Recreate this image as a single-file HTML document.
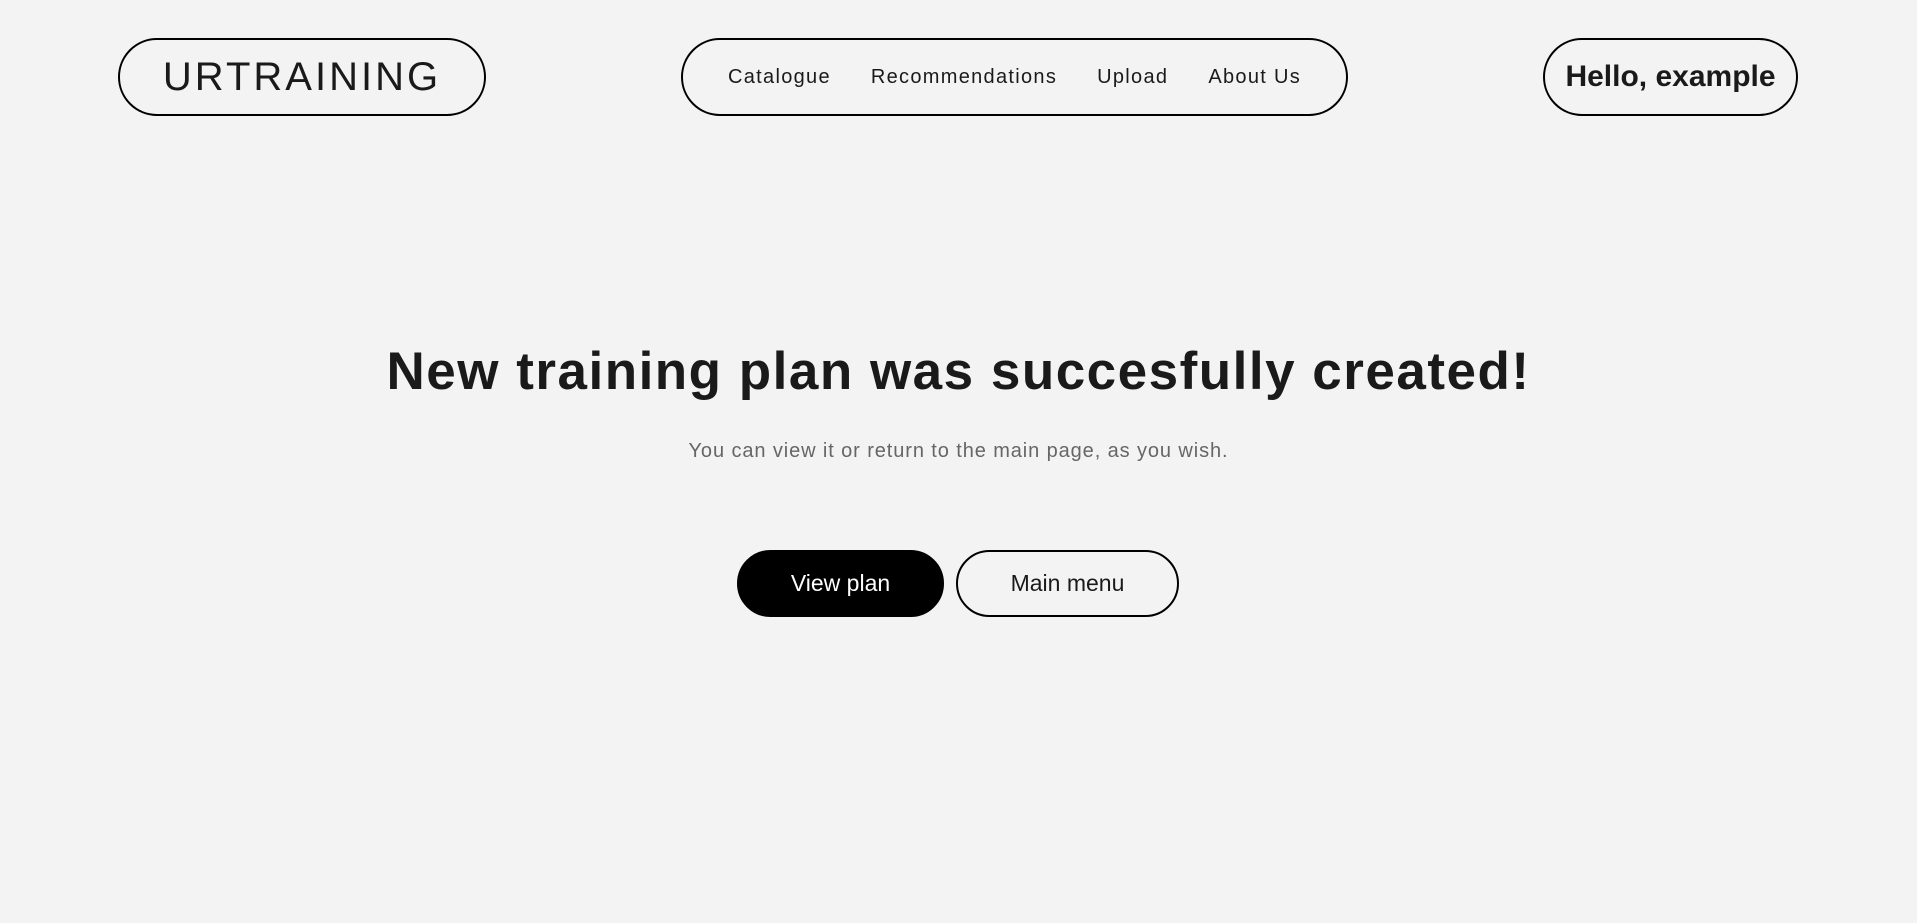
<!DOCTYPE html>
<html><head><style>
body{margin:0;width:1917px;height:923px;background:#f3f3f3;font-family:"Liberation Sans",sans-serif;color:#1a1a1a;position:relative;overflow:hidden}
.box{position:absolute;border:2px solid #000;border-radius:40px;box-sizing:border-box;display:flex;align-items:center;justify-content:center}
.logo{left:118px;top:38px;width:368px;height:78px;font-size:40px;letter-spacing:3px;font-weight:400}
.nav{left:681px;top:38px;width:667px;height:78px;font-size:20px;gap:40px;letter-spacing:1.3px}
.hello{left:1543px;top:38px;width:255px;height:78px;font-size:30px;font-weight:bold}
h1{position:absolute;left:0;width:1917px;top:341px;margin:0;text-align:center;font-size:53px;font-weight:bold;letter-spacing:1.5px}
p{position:absolute;left:0;width:1917px;top:440px;margin:0;text-align:center;font-size:20px;color:#666;letter-spacing:0.9px}
.b1{left:737px;top:550px;width:207px;height:67px;background:#000;color:#fff;font-size:23px;border-radius:34px}
.b2{left:956px;top:550px;width:223px;height:67px;font-size:23px;border-radius:34px}
</style></head><body>
<div class="box logo">URTRAINING</div>
<div class="box nav"><span>Catalogue</span><span>Recommendations</span><span>Upload</span><span>About Us</span></div>
<div class="box hello">Hello, example</div>
<h1>New training plan was succesfully created!</h1>
<p>You can view it or return to the main page, as you wish.</p>
<div class="box b1">View plan</div>
<div class="box b2">Main menu</div>
</body></html>
